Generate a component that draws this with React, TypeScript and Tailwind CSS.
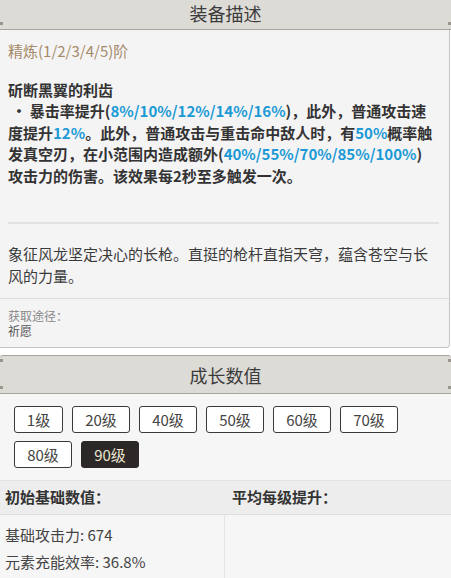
const levels = ['1级', '20级', '40级', '50级', '60级', '70级', '80级', '90级']

const Corner = ({ side }: { side: 'l' | 'r' }) => (
    <span className={`absolute bottom-[4px] w-[3px] h-[3px] bg-[#9a968f] ${side === 'l' ? 'left-0' : 'right-0'}`} />
)

const Blue = ({ children }: { children: React.ReactNode }) => (
    <span className="text-[#1b9ad6]">{children}</span>
)

const App = () => {
    return (
        <div className="w-[451px] h-[578px] overflow-hidden bg-white text-[#333] font-['Noto_Sans_CJK_SC','Noto_Sans',sans-serif]">
            <div className="relative h-[30px] bg-[#dddbd6] border-b border-[#a9a59e] flex items-center justify-center">
                <h2 className="text-[18px] text-[#3c3c3c] leading-none -mt-[4px]">装备描述</h2>
                <Corner side="l" />
                <Corner side="r" />
            </div>

            <div className="bg-[#f5f4f5] border-r border-b border-[#c4c4c4] rounded-br-[4px] mr-[1px]">
                <div className="px-2 pt-[10px] text-[15px] leading-[21.5px]">
                    <p className="text-[#a48a68] mb-[17px]">精炼(1/2/3/4/5)阶</p>
                    <p className="font-bold text-[#333]">斫断黑翼的利齿</p>
                    <p className="font-bold text-[#333] pr-[2px]">
                        &nbsp;• 暴击率提升(<Blue>8%/10%/12%/14%/16%</Blue>)，此外，普通攻击速度提升<Blue>12%</Blue>。此外，普通攻击与重击命中敌人时，有<Blue>50%</Blue>概率触发真空刃，在小范围内造成额外(<Blue>40%/55%/70%/85%/100%</Blue>)
                        <br />
                        攻击力的伤害。该效果每2秒至多触发一次。
                    </p>
                    <div className="h-[2px] bg-[#e2e2e2] mt-[36px] mr-[2px]" />
                    <p className="mt-[19px] mb-[12px] text-[#3a3a3a]">象征风龙坚定决心的长枪。直挺的枪杆直指天穹，蕴含苍空与长风的力量。</p>
                </div>
                <div className="border-t border-[#dcdcdc] px-2 pt-[9px] pb-[9px] text-[12px] leading-[15px] text-[#555]">
                    <p className="text-[#888]">获取途径：</p>
                    <p>祈愿</p>
                </div>
            </div>

            <div className="relative mt-[7px] h-[39px] bg-[#dddbd6] border-t border-b border-[#a9a59e] rounded-t-[3px] flex items-center justify-center">
                <h2 className="text-[18px] text-[#3c3c3c] leading-none">成长数值</h2>
                <Corner side="l" />
                <Corner side="r" />
                <span className="absolute top-[3px] left-0 w-[3px] h-[3px] bg-[#9a968f]" />
                <span className="absolute top-[3px] right-0 w-[3px] h-[3px] bg-[#9a968f]" />
            </div>

            <div className="bg-[#f7f6f7]">
                <div className="flex flex-wrap gap-x-[9px] gap-y-[8px] pl-[14px] pr-[40px] pt-[12px] pb-[12px]">
                    {levels.map((l, i) => (
                        <button
                            key={l}
                            className={`h-[27px] rounded-[3px] border text-[15px] leading-none ${
                                i === 0 ? 'w-[49px]' : 'w-[58px]'
                            } ${
                                l === '90级'
                                    ? 'bg-[#2b2827] border-[#2b2827] text-[#efe6d3]'
                                    : 'bg-white border-[#3a3a3a] text-[#444]'
                            }`}
                        >
                            {l}
                        </button>
                    ))}
                </div>
                <div className="grid grid-cols-[225px_1fr] border-t border-[#e3e3e3]">
                    <div className="bg-[#ededed] h-[34px] flex items-center px-[5px] text-[15px] font-bold text-[#333] border-b border-[#dedede]">初始基础数值：</div>
                    <div className="bg-[#ededed] h-[34px] flex items-center px-[7px] text-[15px] font-bold text-[#333] border-b border-[#dedede]">平均每级提升：</div>
                    <div className="px-[5px] pt-[6px] text-[15px] leading-[27px] text-[#444] border-r border-[#e4e4e4] h-[80px]">
                        <p>基础攻击力: 674</p>
                        <p>元素充能效率: 36.8%</p>
                    </div>
                    <div />
                </div>
            </div>
        </div>
    )
}

export default App
